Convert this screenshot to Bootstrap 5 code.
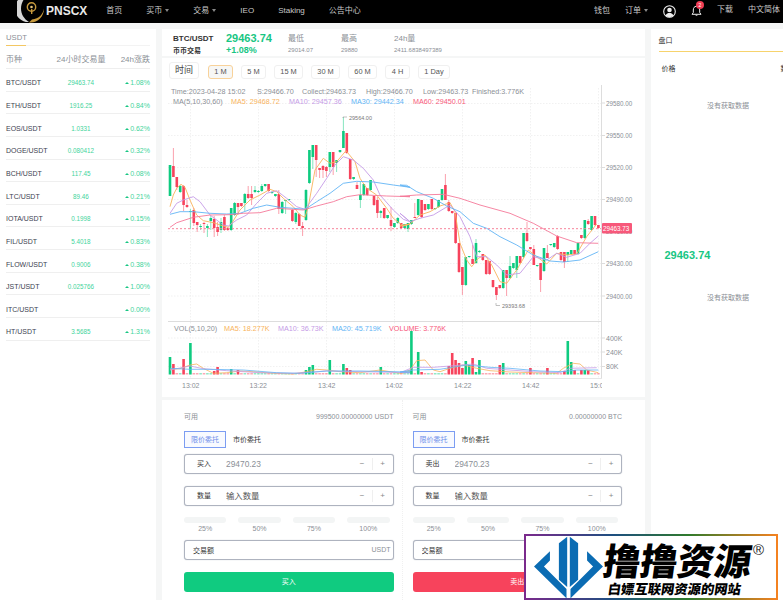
<!DOCTYPE html>
<html lang="zh">
<head>
<meta charset="UTF-8">
<title>PNSCX</title>
<link href="https://cdn.jsdelivr.net/npm/bootstrap@5.3.0/dist/css/bootstrap.min.css" rel="stylesheet">
<style>
html, body { height: 600px; overflow: hidden; }
body { background: #f5f6f6; font-family: "Liberation Sans", "Noto Sans CJK SC", sans-serif; color: #333; font-size: 7px; width: 783px; position: relative; }
.topbar { height: 23px; background: #000; color: #c9c9c9; font-size: 8px; padding: 0 3px 1px 17px; overflow: hidden; }
.topbar .brand { color: #e8e8e8; font-size: 12px; font-weight: 700; margin-right: 19px; margin-left: 1px; }
.topbar .menu { gap: 24px; }
.topbar .menu-r { gap: 15px; }
.logo-mark { flex: none; margin-bottom: -1px; }
.caret-d { display: inline-block; width: 0; height: 0; border: 2.5px solid transparent; border-top: 3px solid #888; border-bottom: 0; margin-left: 3px; vertical-align: 1px; }
.up8 { margin-top: -3px; }
.bell-wrap { position: relative; width: 11px; height: 12px; }
.bell-badge { position: absolute; left: 5px; top: -4px; width: 8px; height: 8px; border-radius: 50%; background: #ef3e55; color: #fff; font-size: 5px; line-height: 8px; text-align: center; }
.shell { padding-top: 6px; gap: 6px; height: 577px; width: 783px; overflow: hidden; }
.pane-l { width: 156px; background: #fff; padding: 0 6px; flex: none; }
.pane-m { width: 482.5px; flex: none; }
.pane-r { width: 155px; background: #fff; padding: 0 8px; flex: none; }
.tab-usdt { height: 17px; border-bottom: 1px solid #f3f3f3; padding-top: 4px; color: #8b8f96; font-size: 7.7px; line-height: 9px; position: relative; }
.tab-usdt::after { content: ""; position: absolute; left: 0; bottom: -1px; width: 20px; height: 1px; background: #f3c763; }
.hd-row { height: 23px; border-bottom: 1px solid #eee; color: #8b8f96; font-size: 8px; padding-top: 9px; line-height: 10px; }
.coin-row { height: 22.65px; border-bottom: 1px solid #efefef; padding-top: 9.4px; line-height: 9px; }
.col-a { width: 45px; flex: none; }
.col-b { width: 60px; flex: none; text-align: center; }
.col-c { width: 39px; flex: none; text-align: right; white-space: nowrap; }
.coin-row .col-a { color: #3d4250; white-space: nowrap; font-size: 7px; }
.coin-row .col-b { color: #43d49c; font-size: 6.3px; }
.coin-row .col-c { color: #43d49c; font-size: 7px; }
.tri-up { display: inline-block; width: 0; height: 0; border: 2px solid transparent; border-bottom: 2.5px solid #18c683; border-top: 0; margin-right: 1px; vertical-align: 1px; }
.quote-bar { height: 27px; background: #fff; padding-left: 11px; margin-bottom: 2px; }
.quote-col { width: 53px; flex: none; padding-top: 4px; }
.quote-col.wide { width: 62px; }
.quote-col .t1 { height: 13px; line-height: 11px; font-size: 8px; color: #8b8f96; white-space: nowrap; }
.quote-col .t2 { line-height: 9px; font-size: 6px; color: #8b8f96; white-space: nowrap; }
.quote-col .pair { color: #333; font-weight: 700; }
.quote-col .sub { color: #333; font-size: 7px; font-weight: 700; }
.quote-col .big { color: #18c683; font-size: 11px; font-weight: 700; }
.quote-col .chg { color: #18c683; font-size: 9px; font-weight: 700; }
.pane-chart { height: 339px; background: #fff; }
.tools { height: 27px; padding: 4px 0 0 7px; gap: 8px; }
.tools .btn { height: 14px; margin-top: 3px; padding: 0; font-size: 7.4px; line-height: 12px; color: #555; border: 1px solid #f0f0f0; border-radius: 3px; --bs-btn-hover-bg: #fff; }
.tools .label-btn { height: 17px; margin-top: 0; width: 30px; font-size: 9px; line-height: 15px; color: #444; margin-right: 1px; }
.tools .on { background: #f7f7f5; border-color: #f8d29a; }
.w25 { width: 25px; } .w29 { width: 29px; } .w32 { width: 32px; }
.pane-chart svg { display: block; }
.pane-chart text { font-family: "Liberation Sans", "Noto Sans CJK SC", sans-serif; }
.pane-trade { height: 200px; margin-top: 3px; background: #fff; padding: 12px 0 0 22px; gap: 19px; position: relative; }
.pane-trade::after { content: ""; position: absolute; left: 240px; top: 0; bottom: 0; border-left: 1px dotted #f0f0f0; }
.side { width: 209.5px; flex: none; }
.avail { height: 10px; line-height: 10px; color: #8b8f96; font-size: 7px; }
.type-tabs { margin-top: 9px; gap: 7px; height: 17px; }
.type-tabs .btn { padding: 0; font-size: 7px; border-radius: 0; line-height: 15px; }
.type-tabs .on { width: 42px; border: 1px solid #7c9df2; color: #6f8fea; background: #f8faff; }
.type-tabs .off { border: 0; color: #333; line-height: 17px; }
.trade-box { height: 20px; border: 1px solid #aeb3bf; border-radius: 3px; box-shadow: 0 0 1px #aeb3bf; background: #fff; flex-wrap: nowrap; align-items: center; }
.trade-box .input-group-text { background: none; border: 0; padding: 0; font-size: 7px; color: #333; border-radius: 0; }
.trade-box .lab { width: 38px; margin-right: 4px; justify-content: center; }
.trade-box .form-control { border: 0; padding: 0; height: 18px; background: none; font-size: 8.4px; color: #8b8f96; min-width: 0; box-shadow: none; }
.trade-box .form-control::placeholder { color: #555; }
.trade-box .op { width: 21px; height: 12px; justify-content: center; color: #888; font-size: 8px; }
.trade-box .op-sep { border-left: 1px solid #efefef; }
.trade-box .form-control.tot { padding-left: 8px; font-size: 7px; color: #333; }
.trade-box .form-control.tot::placeholder { color: #333; }
.trade-box .unit { color: #8b8f96; padding-right: 2px; }
.gap-12 { margin-top: 12px; }
.gap-6 { margin-top: 6px; }
.pct-bars { margin-top: 11px; gap: 12px; padding-right: 4px; }
.pct-bars > div { flex: 1; text-align: center; color: #8b8f96; font-size: 7px; line-height: 10px; }
.pct-bars i { display: block; height: 6px; background: #f3f5f5; border-radius: 3px; margin-bottom: 1px; }
.act { height: 20px; padding: 0; border: 0; font-size: 7px; color: #fff; border-radius: 3px; margin-top: 12px; }
.act-buy, .act-buy:hover { background: #10cb80; color: #fff; }
.act-sell, .act-sell:hover { background: #f7435c; color: #fff; }
.book-hd { height: 22.5px; border-bottom: 1px solid #f7d36c; font-size: 7px; line-height: 24px; color: #333; }
.book-cols { padding: 12px 3px 0; font-size: 7px; line-height: 10px; }
.no-data { text-align: center; color: #8b8f96; font-size: 7px; line-height: 10px; }
.no-data.first { margin-top: 27px; }
.no-data.second { margin-top: 31px; }
.book-price { color: #18c683; font-size: 11px; font-weight: 700; padding-left: 6px; line-height: 14px; margin-top: 137px; }
.wm-box { position: absolute; left: 524px; top: 534px; width: 254px; height: 66px; background: #fff; border: 2px solid; border-image: linear-gradient(90deg, #7b2a8c, #1d4f80 35%, #2f7a2c 65%, #f58220) 1; overflow: hidden; }
.wm-logo { position: absolute; left: 8px; top: 0; width: 69px; height: 63px; }
.wm-name { position: absolute; left: 78px; top: 4px; font-family: "Noto Sans CJK SC", sans-serif; font-weight: 900; font-size: 37px; line-height: 38px; color: #000; white-space: nowrap; transform: skewX(-8deg); }
.wm-reg { position: absolute; left: 227px; top: 6px; font-size: 15px; line-height: 16px; color: #222; }
.wm-sub { position: absolute; left: 82px; top: 45px; font-family: "Noto Sans CJK SC", sans-serif; font-weight: 900; font-size: 13.3px; line-height: 16px; color: #000; white-space: nowrap; transform: skewX(-8deg); }
</style>
</head>
<body>

<!-- top nav -->
<nav class="topbar d-flex align-items-center">
    <svg class="logo-mark" width="28" height="23" viewBox="0 0 28 23">
        <path d="M11 -5A13.500 13.500 0 0 0 12 22C7 19 4 14 4 8.500S7 -2 11 -5z" fill="#d6d6d6"/>
        <path d="M12 22.500C20 23.500 27 17 27 8.500C26 14 22 19 15 19.500z" fill="#c79a3d"/>
        <circle cx="14.500" cy="7" r="4.200" fill="none" stroke="#c79a3d" stroke-width="1.400"/>
        <circle cx="14.500" cy="7" r="1.300" fill="#e3c27a"/>
        <rect x="14" y="9" width="1.400" height="5" fill="#c79a3d"/>
    </svg>
    <span class="brand">PNSCX</span>
    <div class="menu d-flex align-items-center">
        <span>首页</span>
        <span>买币<i class="caret-d"></i></span>
        <span>交易<i class="caret-d"></i></span>
        <span>IEO</span>
        <span>Staking</span>
        <span>公告中心</span>
    </div>
    <div class="menu-r d-flex align-items-center ms-auto">
        <span>钱包</span>
        <span>订单<i class="caret-d"></i></span>
        <svg width="13" height="13" viewBox="0 0 13 13">
            <circle cx="6.500" cy="6.500" r="5.800" fill="none" stroke="#eee" stroke-width="1.100"/>
            <circle cx="6.500" cy="5" r="2.300" fill="#eee"/>
            <path d="M2.600 10.600C3.400 8.600 5 8 6.500 8S9.600 8.600 10.400 10.600A5.500 5.500 0 0 1 2.600 10.600z" fill="#eee"/>
        </svg>
        <div class="bell-wrap">
            <svg width="11" height="12" viewBox="0 0 11 12">
                <path d="M5.500 1.300C3.300 1.300 2.300 3 2.300 5V7.600L1 9.300H10L8.700 7.600V5C8.700 3 7.700 1.300 5.500 1.300z" fill="none" stroke="#eee" stroke-width="1"/>
                <path d="M4.300 10.300A1.300 1.300 0 0 0 6.700 10.300z" fill="#eee"/>
            </svg>
            <span class="bell-badge">2</span>
        </div>
        <span class="up8">下载</span>
        <span class="up8">中文简体</span>
    </div>
</nav>

<div class="shell d-flex">
    <!-- coin list -->
    <aside class="pane-l">
        <div class="tab-usdt">USDT</div>
        <div class="hd-row d-flex">
            <div class="col-a">币种</div>
            <div class="col-b">24小时交易量</div>
            <div class="col-c">24h涨跌</div>
        </div>
        <div id="coinList"></div>
    </aside>

    <!-- middle -->
    <main class="pane-m">
        <div class="quote-bar d-flex">
            <div class="quote-col"><div class="t1 pair">BTC/USDT</div><div class="t2 sub">币币交易</div></div>
            <div class="quote-col wide"><div class="t1 big">29463.74</div><div class="t2 chg">+1.08%</div></div>
            <div class="quote-col"><div class="t1">最低</div><div class="t2">29014.07</div></div>
            <div class="quote-col"><div class="t1">最高</div><div class="t2">29880</div></div>
            <div class="quote-col"><div class="t1">24h量</div><div class="t2">2411.6838497389</div></div>
        </div>

        <section class="pane-chart">
            <div class="tools d-flex">
                <button class="btn label-btn">时间</button>
                <button class="btn w25 on">1 M</button>
                <button class="btn w25">5 M</button>
                <button class="btn w29">15 M</button>
                <button class="btn w29">30 M</button>
                <button class="btn w29">60 M</button>
                <button class="btn w25">4 H</button>
                <button class="btn w32">1 Day</button>
            </div>
            <svg id="kline" width="482" height="312" viewBox="162 85 482 312"></svg>
        </section>

        <section class="pane-trade d-flex">
            <div class="side">
                <div class="avail d-flex justify-content-between"><span>可用</span><span>999500.00000000 USDT</span></div>
                <div class="type-tabs d-flex"><button class="btn on">限价委托</button><button class="btn off">市价委托</button></div>
                <div class="input-group trade-box gap-6">
                    <span class="input-group-text lab">买入</span>
                    <input class="form-control" value="29470.23">
                    <span class="input-group-text op">−</span><span class="input-group-text op op-sep">+</span>
                </div>
                <div class="input-group trade-box gap-12">
                    <span class="input-group-text lab">数量</span>
                    <input class="form-control" placeholder="输入数量">
                    <span class="input-group-text op">−</span><span class="input-group-text op op-sep">+</span>
                </div>
                <div class="pct-bars d-flex">
                    <div><i></i>25%</div><div><i></i>50%</div><div><i></i>75%</div><div><i></i>100%</div>
                </div>
                <div class="input-group trade-box gap-6">
                    <input class="form-control tot" placeholder="交易额">
                    <span class="input-group-text unit">USDT</span>
                </div>
                <button class="btn act act-buy w-100 d-block">买入</button>
            </div>
            <div class="side">
                <div class="avail d-flex justify-content-between"><span>可用</span><span>0.00000000 BTC</span></div>
                <div class="type-tabs d-flex"><button class="btn on">限价委托</button><button class="btn off">市价委托</button></div>
                <div class="input-group trade-box gap-6">
                    <span class="input-group-text lab">卖出</span>
                    <input class="form-control" value="29470.23">
                    <span class="input-group-text op">−</span><span class="input-group-text op op-sep">+</span>
                </div>
                <div class="input-group trade-box gap-12">
                    <span class="input-group-text lab">数量</span>
                    <input class="form-control" placeholder="输入数量">
                    <span class="input-group-text op">−</span><span class="input-group-text op op-sep">+</span>
                </div>
                <div class="pct-bars d-flex">
                    <div><i></i>25%</div><div><i></i>50%</div><div><i></i>75%</div><div><i></i>100%</div>
                </div>
                <div class="input-group trade-box gap-6">
                    <input class="form-control tot" placeholder="交易额">
                    <span class="input-group-text unit">BTC</span>
                </div>
                <button class="btn act act-sell w-100 d-block">卖出</button>
            </div>
        </section>
    </main>

    <!-- order book -->
    <aside class="pane-r">
        <div class="book-hd">盘口</div>
        <div class="book-cols d-flex justify-content-between"><span>价格</span><span>数量</span></div>
        <div class="no-data first">没有获取数据</div>
        <div class="book-price">29463.74</div>
        <div class="no-data second">没有获取数据</div>
    </aside>
</div>

<!-- site stamp -->
<div class="wm-box">
    <svg class="wm-logo" viewBox="30 18 208 190">
        <path fill="#0b6cb3" d="M30 110L78 64V92L60 110L128 178V206Z"/>
        <path fill="#0b6cb3" d="M130 20V172L105 150V40Z"/>
        <path fill="#0b6cb3" d="M238 110L190 64V92L208 110L140 178V206Z"/>
        <path fill="#0b6cb3" d="M138 20V172L163 150V40Z"/>
    </svg>
    <div class="wm-name">撸撸资源</div>
    <div class="wm-reg">®</div>
    <div class="wm-sub">白嫖互联网资源的网站</div>
</div>

<script>
const coins = [
    ["BTC/USDT", "29463.74", "1.08%"], ["ETH/USDT", "1916.25", "0.84%"], ["EOS/USDT", "1.0331", "0.62%"],
    ["DOGE/USDT", "0.080412", "0.32%"], ["BCH/USDT", "117.45", "0.08%"], ["LTC/USDT", "89.46", "0.21%"],
    ["IOTA/USDT", "0.1998", "0.15%"], ["FIL/USDT", "5.4018", "0.83%"], ["FLOW/USDT", "0.9006", "0.38%"],
    ["JST/USDT", "0.025766", "1.00%"], ["ITC/USDT", "", "0.00%"], ["HT/USDT", "3.5685", "1.31%"]
];
document.getElementById("coinList").innerHTML = coins.map(c => `
    <div class="coin-row d-flex">
        <div class="col-a">${c[0]}</div>
        <div class="col-b">${c[1]}</div>
        <div class="col-c"><i class="tri-up"></i>${c[2]}</div>
    </div>`).join("");

// candles read off the picture, in page pixels: colour, body top, body bottom, wick top, wick bottom
const candles = [
"g165,196,165,196","r166,177,148,177","r177,187,177,190","g186,192,185,193","r186,205,185,211","r205,207,200,208",
"g211,212,209,229","r210,223,208,226","r222,225,222,232","g226,227,224,230","r223,224,222,233","g226,228,224,237",
"g218,221,216,230","r219,228,216,237","r227,232,222,236","g222,230,218,233","r217,230,215,231","r228,230,227,231",
"g208,230,208,231","g203,215,202,216","r203,207,203,215","r203,206,203,207","g194,203,193,211","r194,198,186,199",
"r194,198,186,205","g190,192,186,193","g191,192,190,193","g186,191,184,192","g184,186,184,187","r184,191,184,192",
"g192,193,191,194","g194,196,194,197","r194,209,190,214","g202,213,201,214","g200,201,200,214","g199,200,199,201",
"r210,221,209,222","g213,222,212,224","r214,226,213,226","r226,228,222,236","g190,220,189,221","g150,183,150,184",
"g145,157,145,169","r145,160,145,177","r168,170,168,178","r166,170,165,178","r167,171,166,177","g152,167,152,172",
"r152,167,152,175","g160,163,160,172","g150,152,150,153","g131,148,117,148","r133,153,133,154","r159,179,159,180",
"g177,179,177,180","r185,189,182,189","g195,200,182,208","g184,195,184,196","r188,195,188,196","g180,190,180,191",
"r196,205,196,206","r200,213,197,218","g211,213,210,218","r208,218,208,219","g215,218,215,219","r220,226,207,231",
"g223,227,223,228","g218,223,217,224","r223,228,223,229","g224,228,224,229","g223,229,223,232","g220,224,220,225",
"r217,218,203,218","g199,215,199,216","r200,217,200,218","r204,210,204,211","g204,209,204,210","r199,209,199,210",
"g208,209,208,210","g200,207,200,208","g189,200,189,201","r185,200,174,200","r202,211,200,212","r211,213,211,214",
"r213,243,213,244","r243,272,243,273","r267,285,267,295","g257,285,257,286","g256,257,256,258","r259,264,245,264",
"g243,263,239,264","g251,252,250,253","r254,260,254,261","r260,274,260,275","r261,274,261,275","r280,287,280,288",
"r287,295,287,300","r285,288,285,289","g270,288,270,289","r270,278,270,296","g266,278,256,279","g263,268,263,269",
"g256,270,256,278","r256,263,256,264","g233,257,233,258","r233,241,222,242","r247,249,247,250","r249,265,245,265",
"g265,266,265,267","r263,280,263,292","g248,271,248,272","r253,258,245,258","g244,245,244,246","g243,247,243,248",
"r236,249,235,250","r252,260,252,261","r252,262,252,268","g252,255,252,262","g250,254,250,255","r250,254,250,255",
"g243,254,243,255","r235,238,235,239","g220,238,220,239","r221,224,219,225","g216,230,216,231","r216,225,216,226",
"r225,228,225,229"
];

// volume bar tops in px, by candle index; the rest are short stubs
const volTop = {0:357,1:364,4:359,6:343,13:371,14:367,18:369,20:370,40:370,41:367,42:365,47:360,51:364,52:368,53:370,62:367,
    71:331,73:352,74:372,82:366,83:353,84:360,85:363,86:368,87:361,88:365,89:358,90:372,91:360,97:365,98:363,106:368,111:368,
    116:371,117:341,118:362,119:370,121:370,122:370,123:370};

const GREEN = "#0fcb80", RED = "#f7435c";
const ORANGE = "#f8b35c", PURPLE = "#c59be6", BLUE = "#62b4f5", PINK = "#f5799a";

// trend lines, noted from crops of the reference: [crop x, crop y] at 3x
const fromCrop = (pts, ox, oy) => pts.map(p => (ox + p[0] / 3).toFixed(1) + "," + (oy + p[1] / 3).toFixed(1));
const priceLines = [
    [ORANGE, [[30,320],[40,285],[50,265],[63,253],[75,262],[90,300],[110,345],[130,362],[160,368],[190,378],[205,382],[215,370],[240,330],[270,300],[300,285],[330,268],[350,275],[370,295],[400,320],[420,345],[435,352],[445,320],[465,210],[490,175],[510,190],[530,185],[558,152],[585,185],[600,235],[620,265],[650,285],[680,325],[700,355],[730,378],[750,372]],
     [[0,378],[30,372],[60,345],[90,335],[120,318],[150,308],[165,335],[180,430],[200,480],[215,500],[235,475],[255,465],[275,495],[300,545],[320,550],[350,510],[385,450],[410,470],[440,492],[470,460],[500,465],[530,462],[560,410],[590,372]]],
    [PURPLE, [[30,340],[50,310],[70,300],[100,290],[120,305],[150,345],[190,375],[205,378],[230,360],[260,345],[290,310],[320,280],[350,272],[380,295],[410,320],[435,328],[470,280],[500,235],[525,195],[550,170],[580,180],[610,205],[640,240],[660,285],[700,330],[730,358],[750,365]],
     [[0,340],[30,365],[60,355],[100,345],[150,315],[180,350],[210,410],[230,470],[260,470],[290,495],[320,525],[360,520],[400,470],[440,480],[470,460],[500,472],[540,460],[570,430],[595,408]]],
    [BLUE, [[30,343],[60,335],[100,335],[150,340],[200,342],[240,340],[280,325],[320,315],[360,322],[400,325],[435,328],[470,305],[510,280],[550,250],[590,244],[640,246],[700,255],[750,262]],
     [[0,255],[20,256],[50,275],[100,295],[140,318],[180,335],[220,370],[260,385],[300,410],[350,435],[400,465],[450,483],[490,486],[540,480],[595,455]]],
    [PINK, [[30,382],[50,368],[100,352],[150,345],[210,344],[250,340],[300,338],[350,325],[430,330],[470,318],[520,305],[560,290],[600,284],[680,288],[750,290]],
     [[0,289],[50,285],[130,283],[180,295],[240,315],[330,340],[400,370],[470,408],[530,428],[595,430]]]
];
const volLines = [
    [ORANGE, [[30,238],[60,236],[90,225],[110,222],[130,235],[160,250],[200,248],[240,243],[280,245],[340,250],[400,252],[440,245],[470,238],[500,240],[540,245],[600,248],[660,240],[720,250],[750,245]],
     [[0,250],[30,240],[50,212],[75,210],[100,240],[120,245],[150,235],[190,225],[230,235],[270,242],[330,246],[400,248],[470,250],[490,235],[520,220],[540,222],[560,240],[595,248]]],
    [PURPLE, [[30,240],[90,228],[130,236],[200,242],[300,248],[400,250],[500,243],[600,245],[750,248]],
     [[0,248],[40,232],[100,232],[150,228],[220,222],[260,235],[330,240],[400,245],[480,248],[510,235],[590,233]]],
    [BLUE, [[30,235],[90,238],[150,238],[250,240],[350,248],[420,250],[500,243],[600,243],[750,246]],
     [[0,246],[40,240],[120,238],[200,225],[270,232],[330,235],[420,243],[490,245],[530,240],[595,240]]]
];

function label(x, y, str, fill, size) {
    return `<text x="${x}" y="${y}" fill="${fill}" font-size="${size}">${str}</text>`;
}

let s = `<defs><clipPath id="plotClip"><rect x="162" y="85" width="440" height="312"/></clipPath></defs>`;

// grid
const gridX = [190.5, 258.5, 326.5, 394.5, 462.5, 530.5, 598.5];
const gridY = [103.5, 135.5, 167.5, 199.5, 231.5, 263.5, 296, 338, 352, 366.5];
gridX.forEach(x => s += `<line x1="${x}" y1="88" x2="${x}" y2="378" stroke="#eee" stroke-dasharray="1.5 1.5" stroke-width=".8"/>`);
gridY.forEach(y => s += `<line x1="168" y1="${y}" x2="601" y2="${y}" stroke="#eee" stroke-dasharray="1.5 1.5" stroke-width=".8"/>`);
s += `<line x1="601.5" y1="85" x2="601.5" y2="378" stroke="#ddd"/>
      <line x1="168" y1="321.5" x2="602" y2="321.5" stroke="#ddd"/>
      <line x1="168" y1="378.5" x2="602" y2="378.5" stroke="#e6e6e6"/>`;

// candles
candles.forEach((c, i) => {
    const col = c[0] === "g" ? GREEN : RED;
    const [t, b, wt, wb] = c.slice(1).split(",").map(Number);
    const x = 170 + 3.4 * i;
    s += `<line x1="${x}" y1="${wt}" x2="${x}" y2="${wb}" stroke="${col}" stroke-opacity=".5"/>`;
    s += `<rect x="${x - 1.3}" y="${t}" width="2.6" height="${b - t}" fill="${col}"/>`;
    // volume
    const top = volTop[i];
    const vt = top === undefined ? 373 : top;
    s += `<rect x="${x - 1.3}" y="${vt}" width="2.6" height="${374.5 - vt}" fill="${col}" fill-opacity="${top === undefined ? .45 : 1}"/>`;
});

// moving averages
priceLines.forEach(l => {
    const pts = fromCrop(l[1], 160, 100).concat(fromCrop(l[2], 400, 100));
    s += `<polyline points="${pts.join(" ")}" fill="none" stroke="${l[0]}" stroke-width=".9" stroke-linejoin="round"/>`;
});
volLines.forEach(l => {
    const pts = fromCrop(l[1], 160, 290).concat(fromCrop(l[2], 400, 290));
    s += `<polyline points="${pts.join(" ")}" fill="none" stroke="${l[0]}" stroke-width=".8"/>`;
});

// last price
s += `<line x1="168" y1="228.7" x2="601" y2="228.7" stroke="#f7839b" stroke-dasharray="2 2"/>`;

// hi / lo marks
s += `<path d="M343 118V117H347" fill="none" stroke="#999" stroke-width=".6"/>` + label(349, 119.5, "29564.00", "#777", 5.5);
s += `<path d="M496 303V305.5H500" fill="none" stroke="#999" stroke-width=".6"/>` + label(502, 308, "29393.68", "#777", 5.5);

// axis labels
[[29580, 105.5], [29550, 138], [29520, 170], [29490, 202], [29460, 234], [29430, 266], [29400, 298.5]].forEach(a => {
    s += `<line x1="602" y1="${a[1] - 2.5}" x2="605" y2="${a[1] - 2.5}" stroke="#ddd"/>`;
    s += label(606, a[1], a[0] + ".00", "#8b8f96", 6.3);
});
[["400K", 340.5], ["240K", 354.5], ["80K", 369]].forEach(a => {
    s += `<line x1="602" y1="${a[1] - 2.5}" x2="605" y2="${a[1] - 2.5}" stroke="#ddd"/>`;
    s += label(606, a[1], a[0], "#8b8f96", 7);
});
[["13:02", 182], ["13:22", 249.5], ["13:42", 318], ["14:02", 385.5], ["14:22", 454], ["14:42", 522], ["15:02", 590]].forEach(a => {
    s += `<text x="${a[1]}" y="388" fill="#8b8f96" font-size="7" clip-path="url(#plotClip)">${a[0]}</text>`;
});

// price tag
s += `<rect x="602" y="223" width="30" height="10.5" rx="1" fill="#f7587a"/>` + label(603, 230.7, "29463.73", "#fff", 6.3);

// legends
s += label(171, 93.5, "Time:2023-04-28 15:02", "#8b8f96", 7.2) + label(257, 93.5, "S:29466.70", "#8b8f96", 7.2)
   + label(302, 93.5, "Collect:29463.73", "#8b8f96", 7.2) + label(366, 93.5, "High:29466.70", "#8b8f96", 7.2)
   + label(423, 93.5, "Low:29463.73", "#8b8f96", 7.2) + label(472, 93.5, "Finished:3.776K", "#8b8f96", 7.2);
s += label(173, 103.5, "MA(5,10,30,60)", "#8b8f96", 7.2) + label(231, 103.5, "MA5: 29468.72", ORANGE, 7.2)
   + label(289, 103.5, "MA10: 29457.36", PURPLE, 7.2) + label(351, 103.5, "MA30: 29442.34", BLUE, 7.2)
   + label(413, 103.5, "MA60: 29450.01", "#f7587a", 7.2);
s += label(174, 330.5, "VOL(5,10,20)", "#8b8f96", 7.2) + label(224, 330.5, "MA5: 18.277K", ORANGE, 7.2)
   + label(278, 330.5, "MA10: 36.73K", PURPLE, 7.2) + label(332, 330.5, "MA20: 45.719K", BLUE, 7.2)
   + label(389, 330.5, "VOLUME: 3.776K", "#f7587a", 7.2);

document.getElementById("kline").innerHTML = s;
</script>
<script src="https://cdn.jsdelivr.net/npm/bootstrap@5.3.0/dist/js/bootstrap.bundle.min.js"></script>
</body>
</html>
